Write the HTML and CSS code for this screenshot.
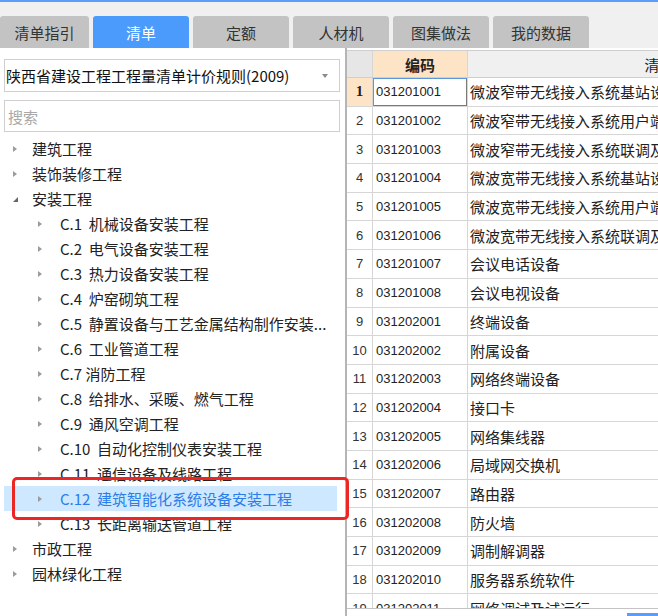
FILE: index.html
```html
<!DOCTYPE html>
<html lang="zh-CN">
<head>
<meta charset="utf-8">
<title>清单</title>
<link rel="stylesheet" href="styles.css">
</head>
<body>
<div class="app">
  <div class="topline"></div>
  <div class="tabs">
    <div class="tab first">清单指引</div>
    <div class="tab active">清单</div>
    <div class="tab">定额</div>
    <div class="tab">人材机</div>
    <div class="tab">图集做法</div>
    <div class="tab">我的数据</div>
  </div>
  <div class="main">
    <div class="left">
      <div class="select"><span>陕西省建设工程工程量清单计价规则(2009)</span><i class="caret"></i></div>
      <div class="search">搜索</div>
      <ul class="tree">
        <li class="node l0"><i class="tw"></i>建筑工程</li>
        <li class="node l0"><i class="tw"></i>装饰装修工程</li>
        <li class="node l0 open"><i class="tw"></i>安装工程</li>
        <li class="node l1"><i class="tw"></i>C.1  机械设备安装工程</li>
        <li class="node l1"><i class="tw"></i>C.2  电气设备安装工程</li>
        <li class="node l1"><i class="tw"></i>C.3  热力设备安装工程</li>
        <li class="node l1"><i class="tw"></i>C.4  炉窑砌筑工程</li>
        <li class="node l1"><i class="tw"></i>C.5  静置设备与工艺金属结构制作安装...</li>
        <li class="node l1"><i class="tw"></i>C.6  工业管道工程</li>
        <li class="node l1"><i class="tw"></i>C.7 消防工程</li>
        <li class="node l1"><i class="tw"></i>C.8  给排水、采暖、燃气工程</li>
        <li class="node l1"><i class="tw"></i>C.9  通风空调工程</li>
        <li class="node l1"><i class="tw"></i>C.10  自动化控制仪表安装工程</li>
        <li class="node l1"><i class="tw"></i>C.11  通信设备及线路工程</li>
        <li class="node l1 sel"><i class="tw"></i>C.12  建筑智能化系统设备安装工程</li>
        <li class="node l1"><i class="tw"></i>C.13  长距离输送管道工程</li>
        <li class="node l0"><i class="tw"></i>市政工程</li>
        <li class="node l0"><i class="tw"></i>园林绿化工程</li>
      </ul>
    </div>
    <div class="grid">
      <div class="row head">
        <div class="c num"></div>
        <div class="c code">编码</div>
        <div class="c name">清单名称</div>
      </div>
      <div class="gbody">
        <div class="row r1"><div class="c num">1</div><div class="c code">031201001</div><div class="c name">微波窄带无线接入系统基站设备</div></div>
        <div class="row"><div class="c num">2</div><div class="c code">031201002</div><div class="c name">微波窄带无线接入系统用户端设备</div></div>
        <div class="row"><div class="c num">3</div><div class="c code">031201003</div><div class="c name">微波窄带无线接入系统联调及试运行</div></div>
        <div class="row"><div class="c num">4</div><div class="c code">031201004</div><div class="c name">微波宽带无线接入系统基站设备</div></div>
        <div class="row"><div class="c num">5</div><div class="c code">031201005</div><div class="c name">微波宽带无线接入系统用户端设备</div></div>
        <div class="row"><div class="c num">6</div><div class="c code">031201006</div><div class="c name">微波宽带无线接入系统联调及试运行</div></div>
        <div class="row"><div class="c num">7</div><div class="c code">031201007</div><div class="c name">会议电话设备</div></div>
        <div class="row"><div class="c num">8</div><div class="c code">031201008</div><div class="c name">会议电视设备</div></div>
        <div class="row"><div class="c num">9</div><div class="c code">031202001</div><div class="c name">终端设备</div></div>
        <div class="row"><div class="c num">10</div><div class="c code">031202002</div><div class="c name">附属设备</div></div>
        <div class="row"><div class="c num">11</div><div class="c code">031202003</div><div class="c name">网络终端设备</div></div>
        <div class="row"><div class="c num">12</div><div class="c code">031202004</div><div class="c name">接口卡</div></div>
        <div class="row"><div class="c num">13</div><div class="c code">031202005</div><div class="c name">网络集线器</div></div>
        <div class="row"><div class="c num">14</div><div class="c code">031202006</div><div class="c name">局域网交换机</div></div>
        <div class="row"><div class="c num">15</div><div class="c code">031202007</div><div class="c name">路由器</div></div>
        <div class="row"><div class="c num">16</div><div class="c code">031202008</div><div class="c name">防火墙</div></div>
        <div class="row"><div class="c num">17</div><div class="c code">031202009</div><div class="c name">调制解调器</div></div>
        <div class="row"><div class="c num">18</div><div class="c code">031202010</div><div class="c name">服务器系统软件</div></div>
        <div class="row"><div class="c num">19</div><div class="c code">031202011</div><div class="c name">网络调试及试运行</div></div>
      </div>
      <div class="hscroll"><div class="thumb"></div></div>
    </div>
  </div>
  <div class="mark"></div>
</div>
</body>
</html>
```
FILE: styles.css
```css
* { box-sizing: border-box; margin: 0; padding: 0; }
html, body { width: 658px; height: 616px; overflow: hidden; background: #fff; }
body { font-family: "Noto Sans CJK SC", "Noto Sans", sans-serif; color: #222; }

.app { position: relative; height: 616px; display: flex; flex-direction: column; }
.topline { height: 2px; background: #5a9dfa; flex: none; }

.tabs { height: 46px; flex: none; background: #f0f0f0; display: flex; align-items: flex-end; gap: 4px; }
.tab { width: 96px; height: 32px; background: #c3c3c3; border-radius: 3px 3px 0 0; display: flex; align-items: center; justify-content: center; font-size: 15px; color: #333; }
.tab.first { width: 89px; }
.tab.active { background: #4a9bfc; color: #fff; }

.main { flex: 1; display: flex; min-height: 0; }

.left { width: 345px; flex: none; background: #fff; padding: 11px 0 0 4px; }
.select { width: 336px; height: 33px; border: 1px solid #cfcfcf; display: flex; align-items: center; justify-content: space-between; padding: 0 11px 0 1px; font-size: 15px; color: #111; }
.caret { width: 0; height: 0; border-left: 3px solid transparent; border-right: 3px solid transparent; border-top: 4px solid #8a8a8a; }
.search { margin-top: 8px; width: 336px; height: 32px; border: 1px solid #cfcfcf; display: flex; align-items: center; padding-left: 3px; font-size: 15px; color: #a8a8a8; }

.tree { list-style: none; margin-top: 4px; width: 333px; }
.node { height: 25px; display: flex; align-items: center; font-size: 15px; color: #222; white-space: pre; overflow: hidden; }
.l0 { padding-left: 9px; }
.l1 { padding-left: 34px; }
.tw { flex: none; width: 19px; display: flex; align-items: center; }
.l1 .tw { width: 22px; }
.tw::before { content: ""; width: 0; height: 0; border-left: 4px solid #9c9c9c; border-top: 3.5px solid transparent; border-bottom: 3.5px solid transparent; }
.open .tw::before { border-left: 0; border-top: 5px solid transparent; border-bottom: 0; border-right: 5px solid #666; margin-top: 1px; }
.node.sel { background: #cde8ff; color: #2b7de9; }

.grid { flex: 1; min-width: 0; border-left: 2px solid #b5b5b5; padding-top: 2px; display: flex; flex-direction: column; overflow: hidden; background: #fff; }
.row { flex: none; display: flex; height: 28.7px; border-bottom: 1px solid #d6d6d6; }
.row.head { height: 28px; border-top: 1px solid #cfcfcf; border-bottom: 1px solid #cfcfcf; }
.c { flex: none; display: flex; align-items: center; overflow: hidden; white-space: nowrap; border-right: 1px solid #d6d6d6; }
.num { width: 26px; justify-content: center; font-family: "Liberation Sans", sans-serif; font-size: 13px; color: #333; }
.code { width: 95px; padding-left: 3px; font-family: "Liberation Sans", sans-serif; font-size: 13px; color: #222; }
.name { width: 414px; padding-left: 2px; font-size: 15px; color: #222; }
.head .num { background: #e6e6e6; }
.head .code { background: #fde4c6; justify-content: center; padding: 0; font-family: "Noto Sans CJK SC", sans-serif; font-size: 15px; font-weight: bold; color: #222; }
.head .name { background: #f0f0f0; justify-content: center; padding: 0; color: #222; }
.r1 .num { background: #fde4c6; font-family: "Liberation Serif", serif; font-weight: bold; font-size: 15px; color: #222; }
.r1 .code { box-shadow: inset 1px 1px 0 #5b97e0, inset -1px -1px 0 #7a7a7a; }
.gbody { flex: 1; min-height: 0; overflow: hidden; }
.hscroll { flex: none; height: 8px; border-top: 1px solid #c4c4c4; display: flex; justify-content: flex-end; align-items: flex-end; }
.thumb { width: 31px; height: 3px; background: #5a9dfa; }

.mark { position: absolute; left: 12px; top: 477px; width: 337px; height: 43px; border: 3px solid #ec2525; border-radius: 5px; pointer-events: none; }
```
